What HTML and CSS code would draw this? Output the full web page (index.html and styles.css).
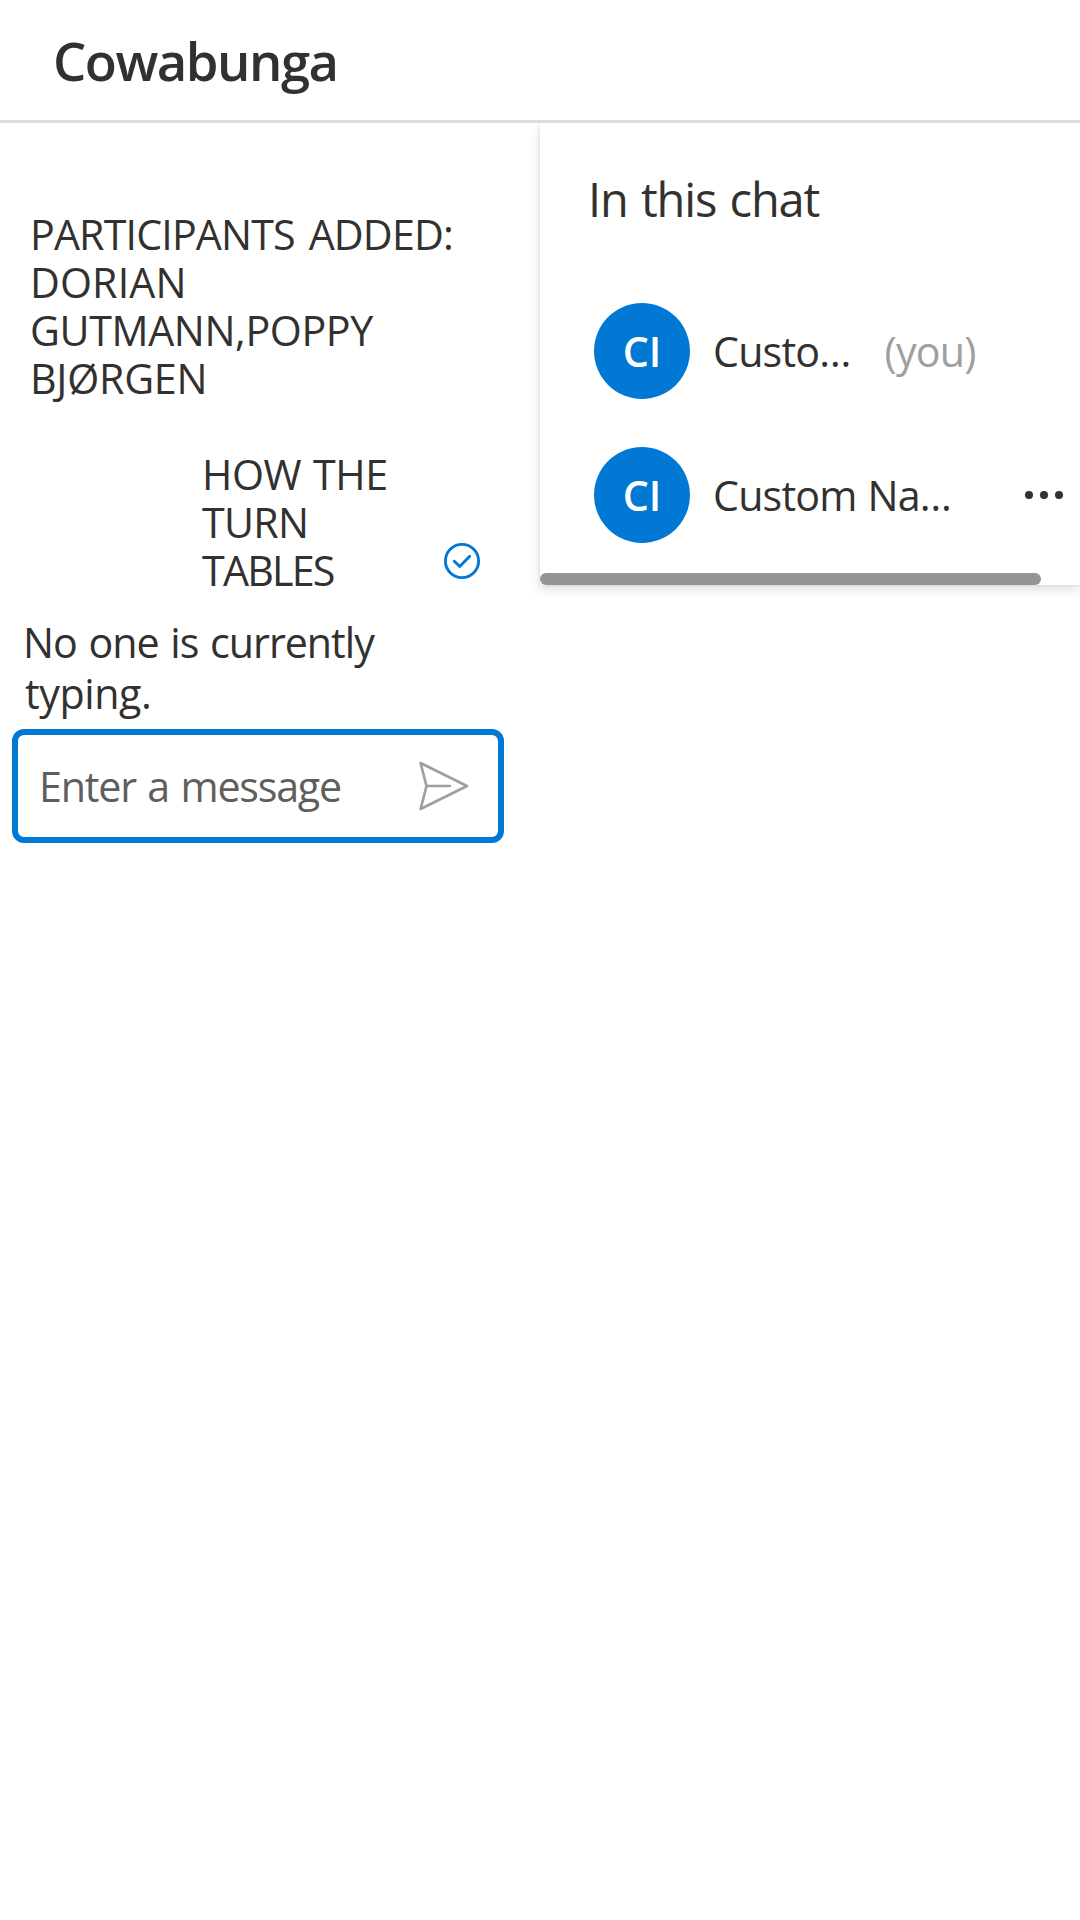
FILE: index.html
```html
<!DOCTYPE html>
<html lang="en">
<head>
<meta charset="utf-8">
<title>Cowabunga</title>
<link rel="stylesheet" href="styles.css">
</head>
<body>
<header class="header"><h1 class="topic">Cowabunga</h1></header>
<main class="content">
  <section class="thread">
    <p class="system-message">
      <span class="line participants">PARTICIPANTS ADDED:</span>
      <span class="line dorian">DORIAN</span>
      <span class="line gutmann">GUTMANN,POPPY</span>
      <span class="line bjorgen">BJØRGEN</span>
    </p>
    <div class="own-message">
      <p class="own-text">
        <span class="line how">HOW THE</span>
        <span class="line turn">TURN</span>
        <span class="line tables">TABLES</span>
      </p>
      <svg class="sent-icon" width="38" height="38" viewBox="0 0 38 38" fill="none" stroke="#0078d4" stroke-width="2.9" stroke-linecap="round" stroke-linejoin="round" aria-label="Sent">
        <circle cx="19" cy="19" r="16.6"/>
        <path d="M11.3 19.3 16.7 24.4 26.7 14.2"/>
      </svg>
    </div>
    <p class="typing"><span class="line">No one is currently</span> <span class="line typing-end">typing.</span></p>
    <div class="send-box">
      <span class="placeholder">Enter a message</span>
      <svg class="send-icon" width="50" height="50" viewBox="0 0 50 50" fill="none" stroke="#a19f9d" stroke-width="2.7" stroke-linecap="round" stroke-linejoin="round" aria-label="Send">
        <path d="M1.6 2 48 25 1.6 48 7.5 25Z M7.5 25H31"/>
      </svg>
    </div>
  </section>
  <aside class="panel">
    <h2 class="panel-title">In this chat</h2>
    <ul class="people">
      <li class="person">
        <span class="avatar">CI</span>
        <span class="name">Custo…</span>
        <span class="you">(you)</span>
      </li>
      <li class="person">
        <span class="avatar">CI</span>
        <span class="name">Custom Na…</span>
        <svg class="more" width="40" height="12" viewBox="0 0 40 12" fill="#323130" aria-label="More">
          <circle cx="5" cy="6" r="4"/><circle cx="20" cy="6" r="4"/><circle cx="35" cy="6" r="4"/>
        </svg>
      </li>
    </ul>
    <div class="scrollbar"></div>
  </aside>
</main>
</body>
</html>
```
FILE: styles.css
```css
* { box-sizing: border-box; margin: 0; padding: 0; }

body {
  background: #fff;
  color: #323130;
  font: 400 41.2px/48px "Open Sans", "Noto Sans", sans-serif;
}

.header {
  height: 123px;
  padding-left: 53px;
  border-bottom: 3px solid #dcdcdc;
}

.topic {
  font-size: 52.6px;
  font-weight: 600;
  line-height: 122px;
  letter-spacing: -1.5px;
}

.content { display: flex; align-items: flex-start; overflow: hidden; height: 1797px; }

.thread { width: 540px; padding-top: 87px; }

.line { display: block; white-space: nowrap; }

.system-message { padding-left: 30px; }
.participants { letter-spacing: -0.85px; word-spacing: 4px; }
.dorian { letter-spacing: 0.1px; }
.gutmann { letter-spacing: -0.38px; }
.bjorgen { letter-spacing: -0.25px; }

.own-message {
  display: flex;
  align-items: flex-end;
  justify-content: space-between;
  margin-top: 48px;
  padding: 0 59px 0 202px;
}
.how { letter-spacing: -0.4px; word-spacing: 1.5px; }
.turn { letter-spacing: -0.69px; }
.tables { letter-spacing: -1.8px; }
.sent-icon { margin-bottom: 14px; }

.typing {
  margin-top: 23px;
  padding-left: 23px;
  line-height: 51.4px;
  letter-spacing: -1px;
  word-spacing: 2px;
}
.typing-end { padding-left: 2px; letter-spacing: -0.41px; }

.send-box {
  display: flex;
  align-items: center;
  justify-content: space-between;
  width: 492px;
  height: 114px;
  margin: 9px 0 0 12px;
  padding: 0 29px 0 21px;
  border: 6px solid #0078d4;
  border-radius: 12px;
}
.placeholder { color: #605e5c; letter-spacing: -1.2px; word-spacing: 2px; }

.panel {
  width: 540px;
  height: 462px;
  padding-top: 46px;
  background: #fff;
  box-shadow: 0 4.8px 10.8px rgba(0, 0, 0, 0.132), 0 0.9px 2.7px rgba(0, 0, 0, 0.108);
}

.panel-title {
  padding-left: 48px;
  font-size: 47px;
  font-weight: 400;
  line-height: 60px;
  letter-spacing: -1.2px;
  word-spacing: 2.5px;
}

.people {
  display: flex;
  flex-direction: column;
  gap: 48px;
  padding: 74px 16px 0 54px;
  list-style: none;
}

.person { display: flex; align-items: center; height: 96px; }

.avatar {
  flex: none;
  width: 96px;
  height: 96px;
  border-radius: 50%;
  background: #0078d4;
  color: #fff;
  font-weight: 600;
  line-height: 96px;
  text-align: center;
}

.name { margin-left: 23px; letter-spacing: -0.8px; word-spacing: 1px; white-space: nowrap; }
.you { margin-left: 34px; color: #a19f9d; letter-spacing: -0.8px; }
.more { margin-left: auto; }

.scrollbar {
  width: 501px;
  height: 12px;
  margin-top: 30px;
  border-radius: 6px;
  background: #959595;
}
```
